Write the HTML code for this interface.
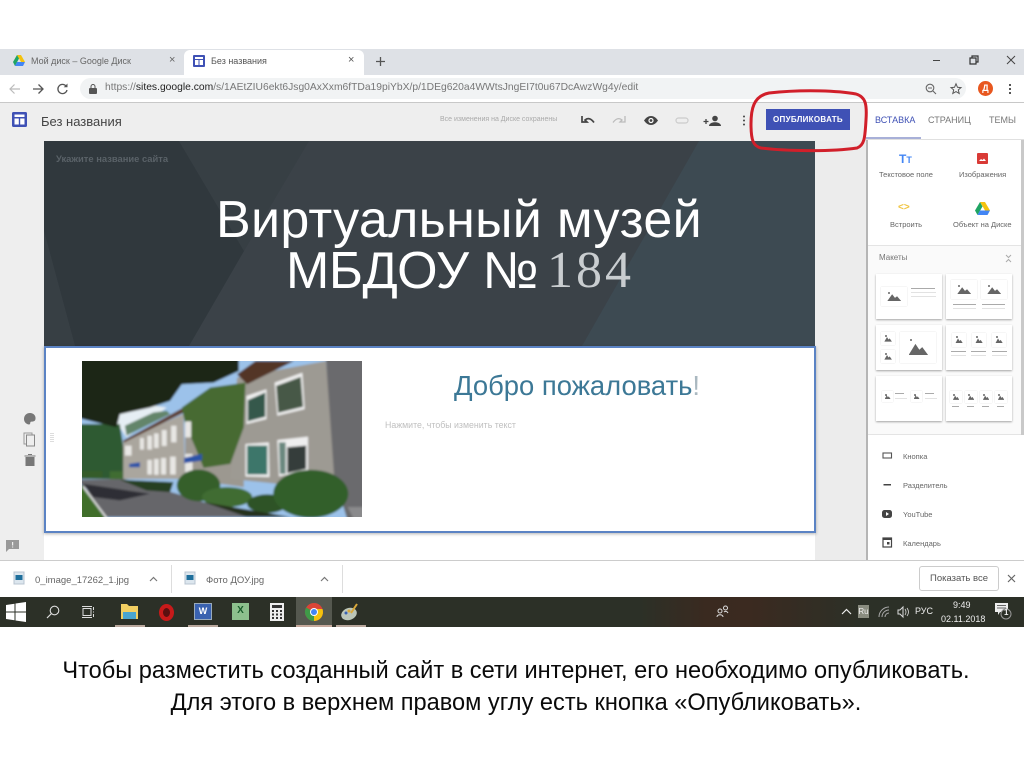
<!DOCTYPE html>
<html lang="ru"><head><meta charset="utf-8"><title>Без названия</title>
<style>
html,body{margin:0;padding:0;background:#fff}
body{width:1024px;height:767px;overflow:hidden;position:relative;font-family:"Liberation Sans","Noto Sans CJK JP",sans-serif}
.a{position:absolute}
.t{position:absolute;white-space:nowrap;line-height:1}
svg{position:absolute;overflow:visible}
.card{position:absolute;background:#fff;box-shadow:0 1px 2px rgba(0,0,0,.35);width:66px;height:45px}
.ph{position:absolute;background:#fff;box-shadow:0 0 1px rgba(0,0,0,.18)}
.ph:after{content:"";position:absolute;left:24%;right:22%;bottom:26%;height:42%;background:#666;clip-path:polygon(0 100%,35% 15%,55% 60%,70% 40%,100% 100%)}
.ph:before{content:"";position:absolute;left:28%;top:24%;width:2px;height:2px;border-radius:50%;background:#666}
.ln{position:absolute;height:1px;background:#aaa}
.ln2{position:absolute;height:1px;background:#e2e2e2}
</style></head><body>

<!-- tab strip -->
<div class="a" style="left:0;top:49px;width:1024px;height:26px;background:#dee1e6"></div>
<div class="a" style="left:184px;top:50px;width:180px;height:26px;background:#fff;border-radius:6px 6px 0 0"></div>
<svg style="left:13px;top:55px" width="12" height="11" viewBox="0 0 12 11"><path d="M4 0h4l4 7H8z" fill="#f4c20d"/><path d="M4 0l2 3.500L2 11 0 7z" fill="#1fa463"/><path d="M2 11l2-4h8l-2 4z" fill="#4285f4"/></svg>
<div class="t" style="left:31px;top:57px;font-size:9px;color:#666">Мой диск – Google Диск</div>
<div class="t" style="left:169px;top:55px;font-size:11px;color:#666">×</div>
<svg style="left:193px;top:55px" width="12" height="12" viewBox="0 0 12 12"><rect width="12" height="12" rx="1" fill="#3f51b5"/><rect x="2" y="2" width="8" height="2" fill="#fff"/><rect x="2" y="5" width="3.500" height="5" fill="#fff"/><rect x="6.500" y="5" width="3.500" height="5" fill="#fff"/></svg>
<div class="t" style="left:211px;top:57px;font-size:9px;color:#555">Без названия</div>
<div class="t" style="left:348px;top:55px;font-size:11px;color:#555">×</div>
<svg style="left:375px;top:56px" width="11" height="11" viewBox="0 0 11 11"><path d="M5.500 1v9M1 5.500h9" stroke="#555" stroke-width="1.300"/></svg>
<svg style="left:933px;top:55px" width="84" height="11" viewBox="0 0 84 11"><path d="M0 5.500h7" stroke="#444" stroke-width="1"/><path d="M37 3h6v6h-6zM39 3V1h6v6h-2" fill="none" stroke="#333" stroke-width="1.200"/><path d="M74 1l8 8M82 1l-8 8" stroke="#444" stroke-width="1"/></svg>

<!-- toolbar -->
<div class="a" style="left:0;top:75px;width:1024px;height:27px;background:#fff;border-bottom:1px solid #c8c8c8"></div>
<div class="a" style="left:80px;top:78px;width:886px;height:21px;background:#f1f3f4;border-radius:11px"></div>
<svg style="left:9px;top:83px" width="60" height="12" viewBox="0 0 60 12"><path d="M11 6H1M5.500 1.500L1 6l4.500 4.500" fill="none" stroke="#bbb" stroke-width="1.200"/><path d="M24 6h10M29.500 1.500L34 6l-4.500 4.500" fill="none" stroke="#555" stroke-width="1.300"/><path d="M57 3a4.600 4.600 0 1 0 1 4" fill="none" stroke="#555" stroke-width="1.300"/><path d="M58.500 0.500v3.800h-3.800z" fill="#555"/></svg>
<svg style="left:89px;top:84px" width="8" height="10" viewBox="0 0 8 10"><rect y="4" width="8" height="6" rx="1" fill="#555"/><path d="M2 4V2.500a2 2 0 0 1 4 0V4" fill="none" stroke="#555"/></svg>
<div class="t" style="left:105px;top:83px;font-size:10.300px;color:#777">https://<span style="color:#222">sites.google.com</span>/s/1AEtZIU6ekt6Jsg0AxXxm6fTDa19piYbX/p/1DEg620a4WWtsJngEI7t0u67DcAwzWg4y/edit</div>
<svg style="left:925px;top:83px" width="36" height="12" viewBox="0 0 36 12"><circle cx="5" cy="5" r="3.800" fill="none" stroke="#666" stroke-width="1.100"/><path d="M8 8l3 3M3 5h4" stroke="#666" stroke-width="1.100"/><path d="M31 .8l1.500 3.500 3.500.3-2.700 2.300.9 3.600-3.200-1.900-3.200 1.900.9-3.600L26 4.600l3.500-.3z" fill="none" stroke="#555" stroke-width="1"/></svg>
<div class="a" style="left:978px;top:81px;width:15px;height:15px;border-radius:50%;background:#e8571f;color:#fff;font-size:9px;font-weight:bold;text-align:center;line-height:15px">Д</div>
<div class="a" style="left:1009px;top:84px;width:2px;height:2px;background:#555;box-shadow:0 4px #555,0 8px #555"></div>

<!-- sites header and canvas background -->
<div class="a" style="left:0;top:103px;width:866px;height:457px;background:#eeeeee"></div>
<div class="a" style="left:866px;top:103px;width:158px;height:457px;background:#fff"></div>
<div class="a" style="left:815px;top:141px;width:51px;height:419px;background:#ececec"></div>
<svg style="left:12px;top:112px" width="15" height="15" viewBox="0 0 15 15"><rect width="15" height="15" rx="1.500" fill="#3f51b5"/><rect x="2.500" y="2.500" width="10" height="2.500" fill="#fff"/><rect x="2.500" y="6.500" width="4.300" height="6" fill="#fff"/><rect x="8.200" y="6.500" width="4.300" height="6" fill="#fff"/></svg>
<div class="t" style="left:41px;top:115px;font-size:13px;color:#444">Без названия</div>
<div class="t" style="left:440px;top:116px;font-size:7px;color:#aaa">Все изменения на Диске сохранены</div>
<svg style="left:581px;top:113px" width="172" height="16" viewBox="0 0 172 16"><path d="M1 3v6h5L4 7c3-2.500 6-1.500 9 2.500" fill="none" stroke="#444" stroke-width="1.700"/><path d="M44 3v6h-5l2-2c-3-2.500-6-1.500-9 2.500" fill="none" stroke="#bbb" stroke-width="1.300"/><path d="M63 7.500c4-6 10-6 14 0-4 6-10 6-14 0z" fill="#444"/><circle cx="70" cy="7.500" r="2.600" fill="#fff"/><circle cx="70" cy="7.500" r="1.400" fill="#444"/><rect x="95" y="5" width="12" height="5" rx="2.500" fill="none" stroke="#ccc" stroke-width="1.200"/><path d="M125 6v5M122.500 8.500h5" stroke="#444" stroke-width="1.300"/><circle cx="134" cy="5.500" r="2.800" fill="#444"/><path d="M128 13c0-5 12-5 12 0z" fill="#444"/><circle cx="163" cy="3.500" r="1" fill="#444"/><circle cx="163" cy="7.500" r="1" fill="#444"/><circle cx="163" cy="11.500" r="1" fill="#444"/></svg>
<div class="a" style="left:766px;top:109px;width:84px;height:21px;background:#3f51b5;color:#fff;font-size:8px;font-weight:bold;text-align:center;line-height:21px;letter-spacing:.3px">ОПУБЛИКОВАТЬ</div>

<div class="t" style="left:875px;top:116px;font-size:9px;color:#3f51b5">ВСТАВКА</div>
<div class="t" style="left:928px;top:116px;font-size:9px;color:#777">СТРАНИЦ</div>
<div class="t" style="left:989px;top:116px;font-size:9px;color:#777">ТЕМЫ</div>
<div class="a" style="left:866px;top:137px;width:55px;height:2px;background:#a8b0d8"></div>
<div class="a" style="left:866px;top:139px;width:158px;height:1px;background:#e0e0e0"></div>

<!-- hero -->
<svg style="left:44px;top:141px" width="771" height="205" viewBox="0 0 771 205">
<rect width="771" height="205" fill="#3b4248"/>
<polygon points="0,0 135,0 200,110 145,205 31,205 0,90" fill="#30383d"/>
<polygon points="0,90 31,205 0,205" fill="#373f44"/>
<polygon points="135,0 265,0 200,110" fill="#373f44"/>
<polygon points="655,0 771,0 771,205 538,205" fill="#3d4a52"/>
</svg>
<div class="t" style="left:56px;top:154px;font-size:9.400px;font-weight:bold;color:#5a6268">Укажите название сайта</div>
<div class="t" style="left:216px;top:194px;font-size:52px;color:#fff;letter-spacing:.3px">Виртуальный музей</div>
<div class="t" style="left:286px;top:245px;font-size:52px;color:#fff;letter-spacing:-.5px">МБДОУ №</div>
<div class="t" style="left:547px;top:245px;font-size:52px;color:#c9cdd0;letter-spacing:3px;font-family:'Liberation Serif',serif">184</div>

<!-- content section -->
<div class="a" style="left:44px;top:531px;width:771px;height:29px;background:#fff"></div>
<div class="a" style="left:44px;top:346px;width:768px;height:183px;background:#fff;border:2px solid #5b83c4;box-shadow:0 1px 3px rgba(0,0,0,.3)"></div>
<div class="a" style="left:50px;top:433px;width:4px;height:9px;background:repeating-linear-gradient(#ddd 0 1px,#fff 1px 2px)"></div>

<!-- photo -->
<svg style="left:82px;top:361px;overflow:hidden" width="280" height="156" viewBox="37 30 836 470" preserveAspectRatio="none">
<defs><filter id="b" x="-5%" y="-5%" width="110%" height="110%"><feGaussianBlur stdDeviation="3"/></filter></defs>
<g filter="url(#b)">
<rect x="20" y="10" width="870" height="510" fill="#9cc2ea"/>
<path d="M20 195L150 190 215 160 290 170 170 260 150 230z" fill="#e6eef4"/>
<path d="M20 220H150L175 385H20z" fill="#2f5a30"/>
<path d="M165 225L250 185 290 180 300 190 170 255z" fill="#64856a"/>
<path d="M20 10H505V60L430 95 335 100 300 150 240 170 150 190 140 230 20 200z" fill="#1a2618"/>
<path d="M160 270L340 190 345 385 160 385z" fill="#aaa69e"/>
<path d="M345 200L520 110V410L345 385z" fill="#9c9890"/>
<path d="M160 270L340 170 340 186 162 276z" fill="#5f4032"/>
<path d="M500 80L765 30 800 390 620 400 480 385z" fill="#9d9a93"/>
<path d="M500 70L555 30H670L530 100z" fill="#523428"/>
<path d="M765 20H890V510H830L790 380z" fill="#6b6a6d"/>
<path d="M335 170L420 110 525 95 520 230 480 340 400 352 375 290 345 220z" fill="#466a32"/>
<path d="M528 135L588 115V205L528 220z" fill="#eee"/><path d="M532 148L584 125V198L532 212z" fill="#35584c"/>
<path d="M612 95L695 65 702 175 620 195z" fill="#eee"/><path d="M617 105L690 78 697 168 623 186z" fill="#475946"/>
<path d="M525 280L595 275 597 380 525 378z" fill="#eee"/><path d="M530 285H590V372H530z" fill="#3c766a"/>
<path d="M620 268L712 258 712 360 625 378z" fill="#eee"/><path d="M650 290L706 285 706 355 650 368z" fill="#343e3a"/><path d="M625 275H645V370H628z" fill="#6a887f"/>
<g fill="#e8e7e4"><rect x="232" y="255" width="14" height="42"/><rect x="252" y="248" width="14" height="44"/><rect x="275" y="238" width="15" height="48"/><rect x="303" y="225" width="16" height="50"/><rect x="345" y="212" width="18" height="48"/><rect x="232" y="328" width="14" height="44"/><rect x="252" y="325" width="14" height="48"/><rect x="273" y="322" width="15" height="50"/><rect x="300" y="318" width="17" height="54"/><rect x="345" y="310" width="22" height="55"/><rect x="210" y="262" width="12" height="35"/><rect x="165" y="285" width="20" height="30"/></g>
<path d="M178 340L210 335V350H178z" fill="#2a52a8"/>
<path d="M342 322L395 310V330L342 338z" fill="#2a52a8"/>
<path d="M20 388L160 385 320 430 540 500H100L50 415z" fill="#66666b"/>
<path d="M40 400L240 430 150 450 70 440z" fill="#2f2f35"/>
<path d="M20 405L40 405 110 510H20z" fill="#3f6e2a"/>
<path d="M40 408L112 505" stroke="#e4e4e4" stroke-width="5" fill="none"/>
<path d="M150 388L310 395 300 425 230 420z" fill="#263f22"/>
<rect x="37" y="362" width="60" height="22" fill="#355c2a"/><rect x="120" y="362" width="38" height="24" fill="#406c32"/>
<ellipse cx="385" cy="405" rx="65" ry="48" fill="#355e2c"/>
<ellipse cx="470" cy="440" rx="75" ry="30" fill="#3f6c32"/>
<ellipse cx="590" cy="460" rx="60" ry="28" fill="#2e5226"/>
<ellipse cx="720" cy="430" rx="112" ry="72" fill="#325e2a"/>
<path d="M400 455L660 500H530z" fill="#26321f"/>
<path d="M830 470H890V510H850z" fill="#8a8a8c"/>
</g>
</svg>

<div class="t" style="left:454px;top:372px;font-size:27.400px;color:#3c7896">Добро пожаловать<span style="color:#aab8c0">!</span></div>
<div class="t" style="left:385px;top:421px;font-size:8.800px;color:#c0c0c0">Нажмите, чтобы изменить текст</div>

<!-- left tools -->
<svg style="left:23px;top:412px" width="14" height="54" viewBox="0 0 14 54"><path d="M7 1C3 1 1 4 1 7c0 3.500 3 5.500 5 5.500 1.500 0 1-1.500 1.500-2.500.5-.8 4.500.5 5-3C13 3.500 10.500 1 7 1z" fill="#777"/><rect x="1" y="21" width="8" height="11" fill="none" stroke="#999"/><rect x="3.500" y="23" width="8" height="11" fill="#eee" stroke="#888"/><path d="M2.500 45h9v9h-9zM1.500 43.500h11v1h-11zM5 42h4v1H5z" fill="#777"/></svg>
<svg style="left:6px;top:540px" width="13" height="12" viewBox="0 0 13 12"><path d="M0 0h13v9H3l-3 3z" fill="#999"/><path d="M6 2h1.200v3.500H6zM6 6.500h1.200v1H6z" fill="#eee"/></svg>

<!-- right panel -->
<div class="a" style="left:866px;top:140px;width:2px;height:420px;background:#b5b5b5"></div>
<div class="a" style="left:1021px;top:140px;width:3px;height:295px;background:#c9c9c9"></div>
<div class="t" style="left:899px;top:153px;font-size:12px;font-weight:bold;color:#4285f4">T<span style="font-size:9px">T</span></div>
<svg style="left:977px;top:153px" width="11" height="11" viewBox="0 0 11 11"><rect width="11" height="11" rx="1" fill="#d93a36"/><path d="M2 8l2-2 1.500 1L7 5.500 9 8z" fill="#fff"/></svg>
<div class="t" style="left:879px;top:171px;font-size:7.500px;color:#666">Текстовое поле</div>
<div class="t" style="left:959px;top:171px;font-size:7.500px;color:#666">Изображения</div>
<div class="t" style="left:898px;top:203px;font-size:10px;font-weight:bold;color:#f0c33c">&lt;&gt;</div>
<svg style="left:975px;top:202px" width="15" height="13" viewBox="0 0 15 13"><path d="M5 0h5l5 8.500h-5z" fill="#f4c20d"/><path d="M5 0l2.500 4.500L2.500 13 0 8.500z" fill="#1fa463"/><path d="M2.500 13L5 8.500h10L12.500 13z" fill="#4285f4"/></svg>
<div class="t" style="left:890px;top:221px;font-size:7.500px;color:#666">Встроить</div>
<div class="t" style="left:953px;top:221px;font-size:7.500px;color:#666">Объект на Диске</div>
<div class="a" style="left:868px;top:245px;width:153px;height:1px;background:#e4e4e4"></div>
<div class="a" style="left:868px;top:246px;width:153px;height:189px;background:#fafafa"></div>
<div class="t" style="left:879px;top:254px;font-size:8px;color:#777">Макеты</div>
<svg style="left:1005px;top:254px" width="7" height="9" viewBox="0 0 7 9"><path d="M1 1l2.500 2.500L6 1M1 8l2.500-2.500L6 8" fill="none" stroke="#aaa"/></svg>

<div class="card" style="left:876px;top:274px">
<div class="ph" style="left:5px;top:13px;width:26px;height:19px"></div><div class="ln" style="left:35px;top:14px;width:24px"></div><div class="ln2" style="left:35px;top:18px;width:25px"></div><div class="ln2" style="left:35px;top:22px;width:25px"></div></div>
<div class="card" style="left:946px;top:274px">
<div class="ph" style="left:5px;top:6px;width:26px;height:19px"></div><div class="ph" style="left:35px;top:6px;width:26px;height:19px"></div><div class="ln" style="left:7px;top:30px;width:23px"></div><div class="ln" style="left:36px;top:30px;width:23px"></div><div class="ln2" style="left:7px;top:34px;width:23px"></div><div class="ln2" style="left:36px;top:34px;width:23px"></div></div>
<div class="card" style="left:876px;top:325px">
<div class="ph" style="left:5px;top:7px;width:14px;height:13px"></div><div class="ph" style="left:5px;top:25px;width:14px;height:13px"></div><div class="ph" style="left:24px;top:7px;width:36px;height:31px"></div></div>
<div class="card" style="left:946px;top:325px">
<div class="ph" style="left:6px;top:8px;width:14px;height:14px"></div><div class="ph" style="left:26px;top:8px;width:14px;height:14px"></div><div class="ph" style="left:46px;top:8px;width:14px;height:14px"></div><div class="ln" style="left:5px;top:26px;width:15px"></div><div class="ln" style="left:25px;top:26px;width:15px"></div><div class="ln" style="left:46px;top:26px;width:15px"></div><div class="ln2" style="left:5px;top:30px;width:15px"></div><div class="ln2" style="left:25px;top:30px;width:15px"></div><div class="ln2" style="left:46px;top:30px;width:15px"></div></div>
<div class="card" style="left:876px;top:376px">
<div class="ph" style="left:6px;top:15px;width:11px;height:11px"></div><div class="ph" style="left:35px;top:15px;width:11px;height:11px"></div><div class="ln" style="left:19px;top:17px;width:9px"></div><div class="ln" style="left:49px;top:17px;width:9px"></div><div class="ln2" style="left:19px;top:22px;width:12px"></div><div class="ln2" style="left:49px;top:22px;width:12px"></div></div>
<div class="card" style="left:946px;top:376px">
<div class="ph" style="left:4px;top:15px;width:12px;height:12px"></div><div class="ph" style="left:19px;top:15px;width:12px;height:12px"></div><div class="ph" style="left:34px;top:15px;width:12px;height:12px"></div><div class="ph" style="left:49px;top:15px;width:12px;height:12px"></div><div class="ln" style="left:6px;top:30px;width:7px"></div><div class="ln" style="left:21px;top:30px;width:7px"></div><div class="ln" style="left:36px;top:30px;width:7px"></div><div class="ln" style="left:51px;top:30px;width:7px"></div></div>

<div class="a" style="left:868px;top:434px;width:153px;height:1px;background:#e4e4e4"></div>
<svg style="left:882px;top:451px" width="11" height="100" viewBox="0 0 11 100"><rect x="1" y="2" width="8.500" height="5" fill="none" stroke="#555" stroke-width="1.100"/><rect x="1.500" y="33" width="7.500" height="1.500" fill="#444"/><rect x="0" y="59" width="10" height="8" rx="2.500" fill="#444"/><path d="M4 61l3 2-3 2z" fill="#fff"/><rect x="1" y="87" width="8.500" height="9" fill="none" stroke="#444" stroke-width="1.200"/><rect x="1" y="87" width="8.500" height="2" fill="#444"/><rect x="5" y="91" width="2.500" height="2.500" fill="#444"/></svg>
<div class="t" style="left:903px;top:453px;font-size:7.500px;color:#666">Кнопка</div>
<div class="t" style="left:903px;top:482px;font-size:7.500px;color:#666">Разделитель</div>
<div class="t" style="left:903px;top:511px;font-size:7.500px;color:#666">YouTube</div>
<div class="t" style="left:903px;top:540px;font-size:7.500px;color:#666">Календарь</div>

<!-- download bar -->
<div class="a" style="left:0;top:560px;width:1024px;height:37px;background:#fff;border-top:1px solid #ccc;box-sizing:border-box"></div>
<svg style="left:14px;top:572px" width="10" height="12" viewBox="0 0 10 12"><rect width="10" height="12" fill="#dce6ee" stroke="#b8c4d0"/><rect x="1.500" y="3" width="7" height="5" fill="#1e6f9c"/></svg>
<div class="t" style="left:35px;top:576px;font-size:9.500px;color:#666">0_image_17262_1.jpg</div>
<svg style="left:149px;top:576px" width="9" height="6" viewBox="0 0 9 6"><path d="M1 5l3.500-3.500L8 5" fill="none" stroke="#777" stroke-width="1.200"/></svg>
<div class="a" style="left:171px;top:565px;width:1px;height:28px;background:#ddd"></div>
<svg style="left:185px;top:572px" width="10" height="12" viewBox="0 0 10 12"><rect width="10" height="12" fill="#dce6ee" stroke="#b8c4d0"/><rect x="1.500" y="3" width="7" height="5" fill="#1e6f9c"/></svg>
<div class="t" style="left:206px;top:576px;font-size:9.500px;color:#666">Фото ДОУ.jpg</div>
<svg style="left:320px;top:576px" width="9" height="6" viewBox="0 0 9 6"><path d="M1 5l3.500-3.500L8 5" fill="none" stroke="#777" stroke-width="1.200"/></svg>
<div class="a" style="left:342px;top:565px;width:1px;height:28px;background:#ddd"></div>
<div class="a" style="left:919px;top:566px;width:78px;height:23px;border:1px solid #ccc;border-radius:3px;font-size:9.500px;color:#555;text-align:center;line-height:23px">Показать все</div>
<svg style="left:1007px;top:574px" width="9" height="9" viewBox="0 0 9 9"><path d="M1 1l7 7M8 1L1 8" stroke="#666" stroke-width="1.200"/></svg>

<!-- taskbar -->
<div class="a" style="left:0;top:597px;width:1024px;height:30px;background:#2c3027"></div>
<div class="a" style="left:640px;top:597px;width:220px;height:30px;background:linear-gradient(90deg,#2c3027,#3a2a20 30%,#3b2a20 50%,#2c3027)"></div>
<div class="a" style="left:296px;top:597px;width:36px;height:30px;background:#55584f"></div>
<svg style="left:6px;top:602px" width="20" height="20" viewBox="0 0 20 20"><path d="M0 3l8.500-1.300V9.500H0zM9.500 1.500L20 0v9.500H9.500zM0 10.500h8.500v7.800L0 17zM9.500 10.500H20V20L9.500 18.500z" fill="#fff"/></svg>
<svg style="left:46px;top:605px" width="14" height="14" viewBox="0 0 14 14"><circle cx="8.500" cy="5.500" r="4.300" fill="none" stroke="#ddd" stroke-width="1.100"/><path d="M5.500 8.500L1 13" stroke="#ddd" stroke-width="1.200"/></svg>
<svg style="left:82px;top:606px" width="13" height="12" viewBox="0 0 13 12"><rect x="1" y="2.500" width="8" height="7" fill="none" stroke="#ddd"/><path d="M0 .5h10M0 11.500h10M11.500 1v3M11.500 5.500v1M11.500 8v3" stroke="#ddd"/></svg>
<svg style="left:121px;top:604px" width="17" height="15" viewBox="0 0 17 15"><path d="M0 0h6l2 2h9v13H0z" fill="#f3cf62"/><rect x="2" y="8" width="13" height="7" fill="#4aa5d0"/></svg>
<div class="a" style="left:159px;top:604px;width:15px;height:17px;border-radius:50%;border:4px solid #c71a1a;box-sizing:border-box;background:#5a1010"></div>
<div class="a" style="left:194px;top:603px;width:18px;height:17px;background:#3a62b0;border:1px solid #9ab;box-sizing:border-box;color:#fff;font-size:9px;font-weight:bold;text-align:center;line-height:15px">W</div>
<div class="a" style="left:232px;top:603px;width:17px;height:17px;background:#8dc08d;color:#185c2a;font-size:10px;font-weight:bold;text-align:center;line-height:16px">X</div>
<svg style="left:270px;top:603px" width="14" height="18" viewBox="0 0 14 18"><rect width="14" height="18" fill="#eee"/><rect x="2" y="2" width="10" height="3" fill="#333"/><g fill="#333"><rect x="2" y="7" width="2" height="2"/><rect x="6" y="7" width="2" height="2"/><rect x="10" y="7" width="2" height="2"/><rect x="2" y="10.500" width="2" height="2"/><rect x="6" y="10.500" width="2" height="2"/><rect x="10" y="10.500" width="2" height="2"/><rect x="2" y="14" width="2" height="2"/><rect x="6" y="14" width="2" height="2"/><rect x="10" y="14" width="2" height="2"/></g></svg>
<svg style="left:305px;top:603px" width="18" height="18" viewBox="0 0 18 18"><circle cx="9" cy="9" r="9" fill="#db4437"/><path d="M9 9L1.200 4.500A9 9 0 0 0 9 18z" fill="#3f9a48"/><path d="M9 9V18A9 9 0 0 0 17.500 6H9z" fill="#f4c20d"/><circle cx="9" cy="9" r="4" fill="#fff"/><circle cx="9" cy="9" r="3" fill="#4285f4"/></svg>
<svg style="left:341px;top:603px" width="18" height="18" viewBox="0 0 18 18"><ellipse cx="8" cy="11" rx="8" ry="6" fill="#bcc6b8" transform="rotate(-20 8 11)"/><circle cx="5" cy="10" r="1.500" fill="#3a62b0"/><circle cx="8" cy="8" r="1.500" fill="#d9a83a"/><path d="M10 10L16 1" stroke="#d9a83a" stroke-width="2"/></svg>
<div class="a" style="left:115px;top:625px;width:30px;height:2px;background:#b9a79c"></div>
<div class="a" style="left:188px;top:625px;width:30px;height:2px;background:#b9a79c"></div>
<div class="a" style="left:296px;top:625px;width:36px;height:2px;background:#c6a99c"></div>
<div class="a" style="left:336px;top:625px;width:30px;height:2px;background:#b9a79c"></div>
<svg style="left:716px;top:605px" width="13" height="13" viewBox="0 0 13 13"><circle cx="4" cy="6" r="2" fill="none" stroke="#ddd"/><circle cx="9.500" cy="3" r="2" fill="none" stroke="#ddd"/><path d="M1 12c0-3 6-3 6 0M8 7c1-1 3-1 4 1" fill="none" stroke="#ddd"/></svg>
<svg style="left:841px;top:608px" width="11" height="7" viewBox="0 0 11 7"><path d="M1 6l4.500-4.500L10 6" fill="none" stroke="#eee" stroke-width="1.200"/></svg>
<div class="a" style="left:858px;top:605px;width:11px;height:13px;background:#8a8d80;color:#eee;font-size:8px;text-align:center;line-height:13px">Ru</div>
<svg style="left:878px;top:606px" width="33" height="12" viewBox="0 0 33 12"><path d="M1 11A10 10 0 0 1 11 1M4 11A7 7 0 0 1 11 4M7 11a4 4 0 0 1 4-4" fill="none" stroke="#aaa"/><path d="M20 4h2l3-3v10l-3-3h-2z" fill="none" stroke="#ddd"/><path d="M27 3q2 3 0 6M29 2q3 4 0 8" fill="none" stroke="#ddd" stroke-width=".8"/></svg>
<div class="t" style="left:915px;top:607px;font-size:9px;color:#eee">РУС</div>
<div class="t" style="left:953px;top:601px;font-size:9px;color:#eee">9:49</div>
<div class="t" style="left:941px;top:615px;font-size:9px;color:#eee">02.11.2018</div>
<svg style="left:995px;top:603px" width="18" height="18" viewBox="0 0 18 18"><path d="M0 0h13v9H5l-2 3V9H0z" fill="#eee"/><path d="M2 2.500h9M2 5h9" stroke="#666"/><circle cx="11" cy="11" r="5" fill="#2c3027" stroke="#999"/></svg>
<div class="t" style="left:1004px;top:609px;font-size:8px;font-weight:bold;color:#eee">1</div>

<!-- red annotation -->
<svg style="left:745px;top:90px" width="130" height="70" viewBox="0 0 130 70"><path d="M24 3C60 -1 95 1 111 4 121 7 122 15 121 30 120 46 120 55 112 58 85 62 40 61 16 58 8 56 6 50 6 34 6 20 8 6 24 3z" fill="none" stroke="#d11f2a" stroke-width="3"/></svg>

<!-- caption -->
<div class="t" style="left:0;top:660px;width:1032px;text-align:center;font-size:23.600px;color:#0a0a0a">Чтобы разместить созданный сайт в сети интернет, его необходимо опубликовать.</div>
<div class="t" style="left:0;top:692px;width:1032px;text-align:center;font-size:23.600px;color:#0a0a0a">Для этого в верхнем правом углу есть кнопка «Опубликовать».</div>

</body></html>
